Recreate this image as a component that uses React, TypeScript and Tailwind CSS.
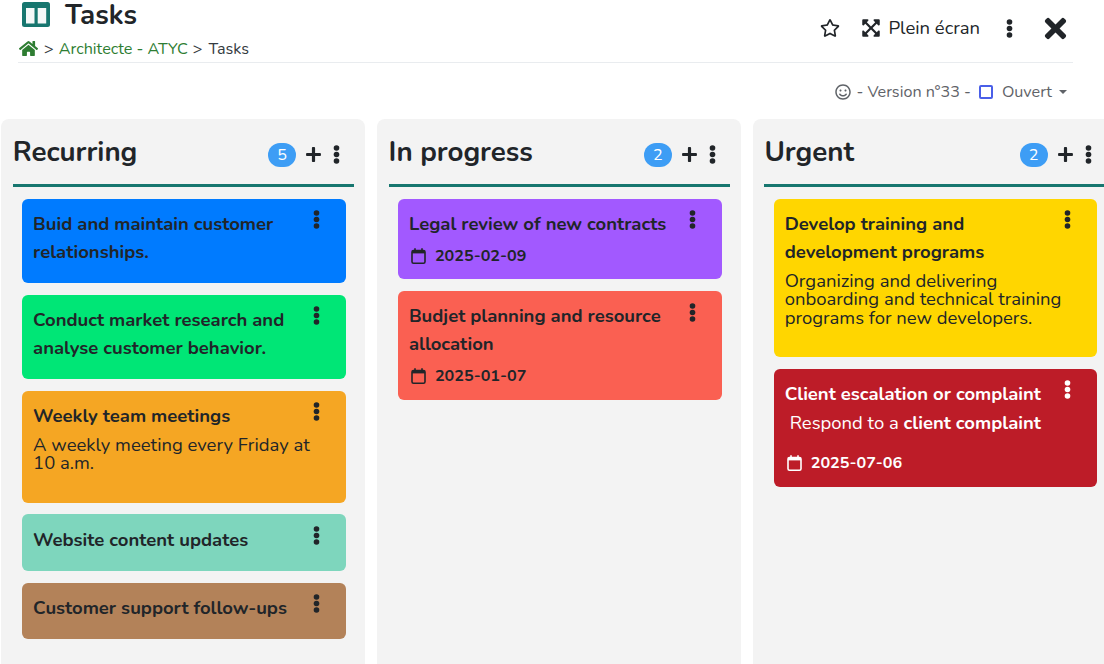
import React from "react";
import { FaHome, FaRegStar, FaExpandArrowsAlt, FaTimes, FaPlus, FaRegSmile } from "react-icons/fa";

function Dots({ className = "" }: { className?: string }) {
  return (
    <svg width="7" height="19" viewBox="0 0 7 19" className={className} fill="currentColor">
      <circle cx="3.5" cy="3" r="2.8" />
      <circle cx="3.5" cy="9.5" r="2.8" />
      <circle cx="3.5" cy="16" r="2.8" />
    </svg>
  );
}

function Cal() {
  return (
    <svg width="15" height="16" viewBox="0 0 15 16" fill="none" stroke="currentColor" strokeWidth="1.6" className="shrink-0">
      <rect x="1" y="2.5" width="13" height="12.7" rx="1.5" />
      <path d="M1 4.2h13" strokeWidth="2.4" />
      <path d="M4 0.3v3M11 0.3v3" />
    </svg>
  );
}

type CardT = {
  title: string;
  bg: string;
  h: string;
  desc?: React.ReactNode;
  date?: string;
  light?: boolean;
  pull?: boolean;
  lowDots?: boolean;
};

const cols: { name: string; n: number; cards: CardT[] }[] = [
  {
    name: "Recurring",
    n: 5,
    cards: [
      { title: "Buid and maintain customer relationships.", bg: "bg-[#007bff]", h: "h-[84px]" },
      { title: "Conduct market research and analyse customer behavior.", bg: "bg-[#00e676]", h: "h-[84px]" },
      { title: "Weekly team meetings", bg: "bg-[#f5a623]", h: "h-[112px]", desc: "A weekly meeting every Friday at 10 a.m." },
      { title: "Website content updates", bg: "bg-[#7ed6bd]", h: "h-[57px]", pull: true, lowDots: true },
      { title: "Customer support follow-ups", bg: "bg-[#b38259]", h: "h-[56px]" },
    ],
  },
  {
    name: "In progress",
    n: 2,
    cards: [
      { title: "Legal review of new contracts", bg: "bg-[#a259ff]", h: "h-[80.4px]", date: "2025-02-09" },
      { title: "Budjet planning and resource allocation", bg: "bg-[#fa6052]", h: "h-[108.6px]", date: "2025-01-07", lowDots: true },
    ],
  },
  {
    name: "Urgent",
    n: 2,
    cards: [
      {
        title: "Develop training and development programs",
        bg: "bg-[#ffd600]",
        h: "h-[158px]",
        desc: "Organizing and delivering onboarding and technical training programs for new developers.",
      },
      {
        title: "Client escalation or complaint",
        bg: "bg-[#bd1c28]",
        h: "h-[118px]",
        light: true,
        date: "2025-07-06",
        desc: (
          <span className="block pl-[5px] pb-[13px] text-white">
            Respond to a <b className="font-bold">client complaint</b>
          </span>
        ),
      },
    ],
  },
];

function Card({ c }: { c: CardT }) {
  const ink = c.light ? "text-white" : "text-[#212529]";
  return (
    <div className={`relative w-[323.7px] rounded-md px-[11px] ${c.pull ? "-mt-[1px] pt-[12px]" : "pt-[11px]"} ${c.bg} ${c.h} ${ink}`}>
      <Dots className={`absolute right-[26px] ${c.lowDots ? "top-[12px]" : "top-[11px]"}`} />
      <div className="pr-[36px] text-[18.48px] font-bold leading-[28px]">{c.title}</div>
      {c.desc && <div className="text-[18.48px] leading-[18.48px] mt-[6px]">{c.desc}</div>}
      {c.date && (
        <div className="flex items-center gap-[9px] pl-[2px] mt-[6px] text-[16.17px] font-bold leading-[24px]">
          <Cal />
          <span>{c.date}</span>
        </div>
      )}
    </div>
  );
}

export default function App() {
  return (
    <div className="h-[664px] w-[1104px] overflow-hidden bg-white text-[#212529] font-['Nunito','Lato','Noto_Sans',sans-serif]">
      <div className="mx-[18px] w-[1055px] h-[63px] border-b border-[#e9ecef] flex justify-between">
        <div>
          <div className="flex items-center h-[31px] pl-[4px]">
            <svg width="28" height="25" viewBox="0 0 28 25" className="-mt-[2px]">
              <rect width="28" height="25" rx="2.5" fill="#17766f" />
              <rect x="4" y="6" width="8.5" height="15.5" fill="#f4f8f8" />
              <rect x="15.7" y="6" width="8.5" height="15.5" fill="#f4f8f8" />
            </svg>
            <span className="ml-[15px] text-[27.72px] font-bold leading-[31px]">Tasks</span>
          </div>
          <div className="flex items-center h-[20px] mt-[8px] pl-[1px] text-[16.17px] leading-[20px] text-[#343a40]">
            <FaHome className="text-[#2e7d32] text-[19px] -mt-[2px]" />
            <span className="ml-[6px]">&gt;</span>
            <span className="ml-[5px] text-[#2e7d32]">Architecte - ATYC</span>
            <span className="ml-[5px]">&gt;</span>
            <span className="ml-[6px]">Tasks</span>
          </div>
        </div>
        <div className="flex items-center h-[56px] pr-[2px] text-[#212529]">
          <FaRegStar className="text-[20px]" />
          <FaExpandArrowsAlt className="ml-[21px] text-[20px]" />
          <span className="ml-[7px] pt-[1px] text-[18.48px]">Plein écran</span>
          <Dots className="ml-[26px]" />
          <FaTimes className="ml-[27px] text-[31px]" />
        </div>
      </div>
      <div className="h-[56px] pt-[2px] flex items-center justify-end pr-[37px] text-[16.17px] text-[#5f6368]">
        <FaRegSmile className="text-[16px]" />
        <span className="ml-[5px]">- Version n°33 -</span>
        <span className="ml-[8px] w-[14px] h-[14px] rounded-[2px] border-2 border-[#4a5fe8]" />
        <span className="ml-[9px]">Ouvert</span>
        <span className="ml-[7px] w-0 h-0 border-x-[4.5px] border-x-transparent border-t-[4.5px] border-t-[#5f6368]" />
      </div>
      <div className="flex gap-[12px] pl-[1px] h-[545px]">
        {cols.map((col) => (
          <div key={col.name} className="w-[363.8px] shrink-0 rounded-t-lg bg-[#f3f3f3] pl-[11.8px] pt-[12px]">
            <div className="flex items-center h-[41px] pr-[24.8px]">
              <span className="text-[27.72px] font-bold leading-[41px] flex-1 pt-[1px]">{col.name}</span>
              <span className="w-[28px] h-[24px] rounded-full bg-[#3d9df5] text-white text-[16.17px] flex items-center justify-center mt-[7px]">{col.n}</span>
              <FaPlus className="ml-[9px] mt-[6px] text-[17px]" />
              <Dots className="ml-[11px] mt-[6px]" />
            </div>
            <div className="h-[3px] bg-[#17766f] mt-[12px] w-[341px]" />
            <div className="flex flex-col gap-[12px] pl-[9.3px] pt-[12px]">
              {col.cards.map((c) => (
                <Card key={c.title} c={c} />
              ))}
            </div>
          </div>
        ))}
      </div>
    </div>
  );
}
